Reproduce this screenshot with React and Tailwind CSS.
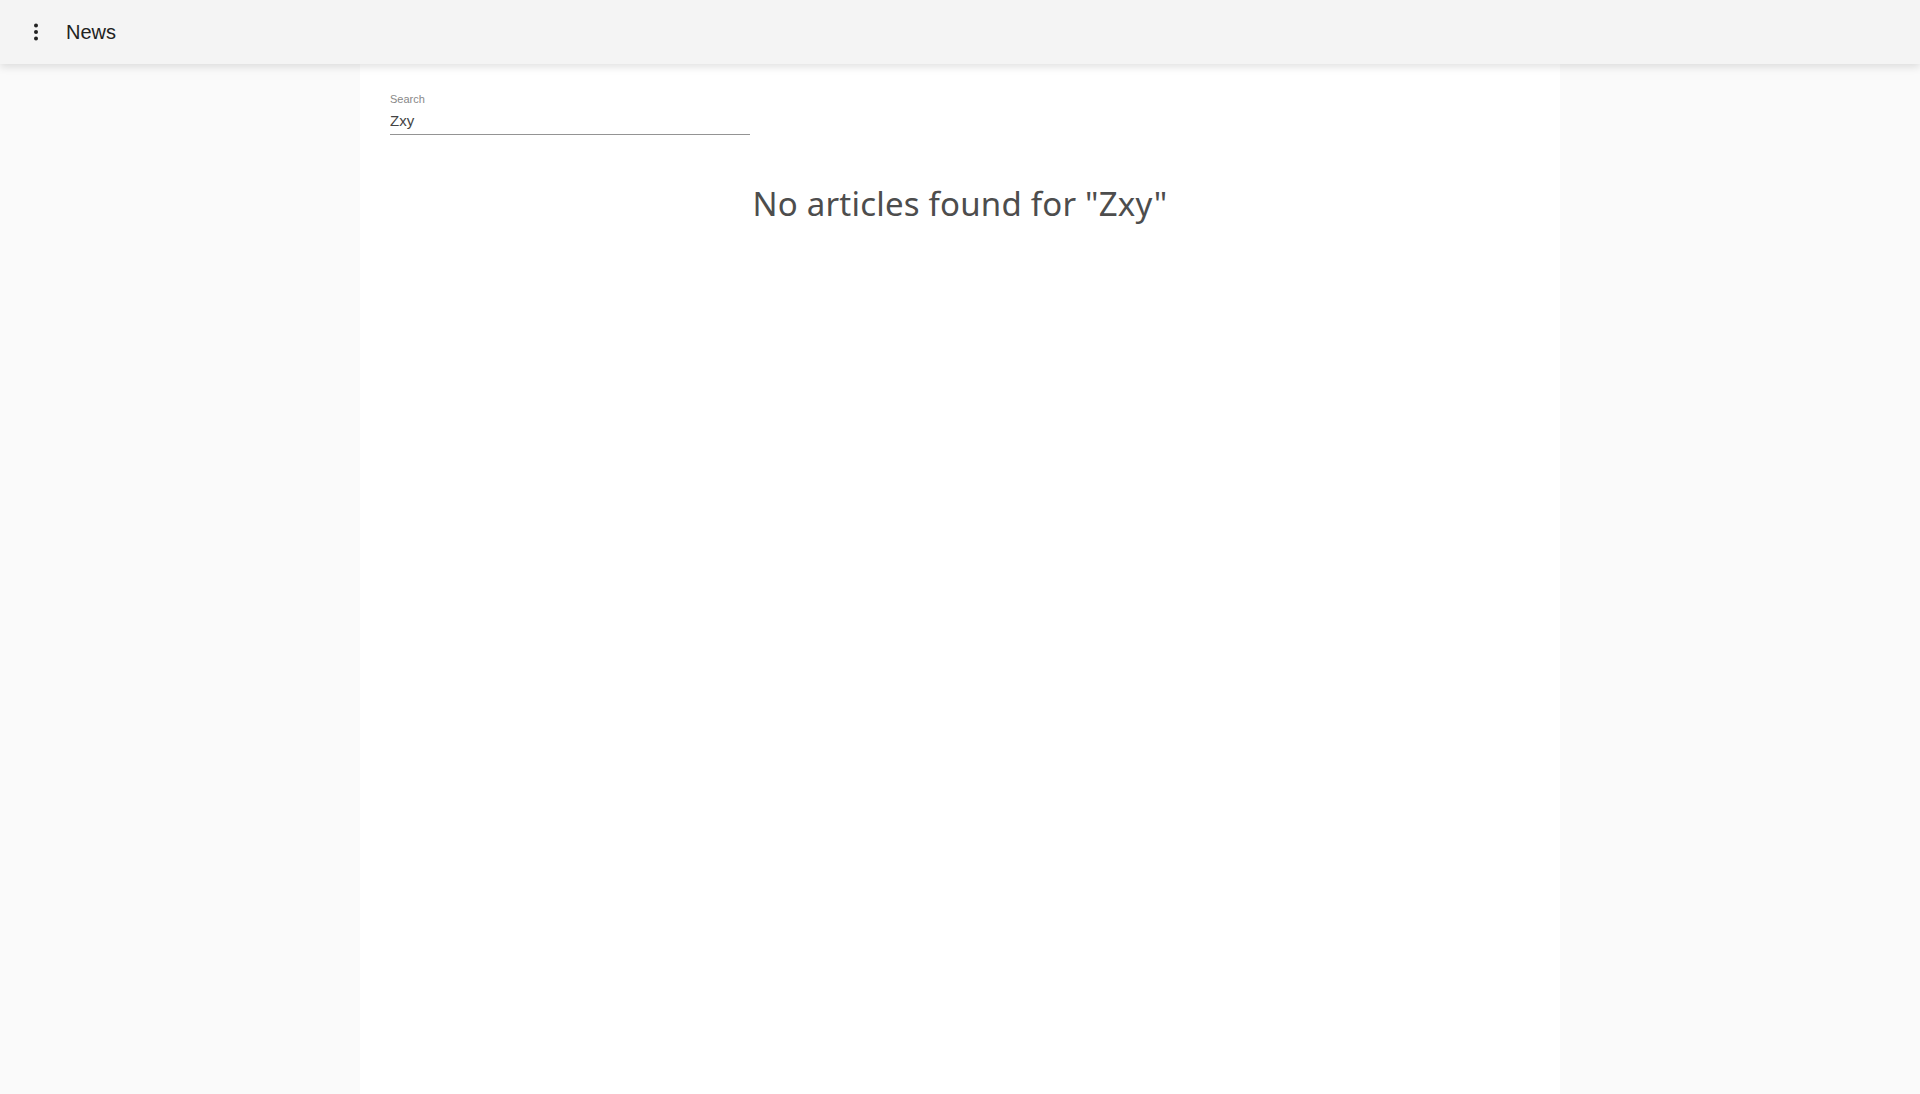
export default function App() {
    return (
        <div className="min-h-screen bg-[#fafafa] font-['Liberation_Sans',Arial,sans-serif]">
            <header className="sticky top-0 z-10 flex h-16 items-center bg-[#f4f4f4] shadow-[0_3px_8px_rgba(0,0,0,0.12)]">
                <button type="button" className="ml-[27px] flex h-6 w-[18px] items-center justify-center">
                    <svg width="6" height="18" viewBox="0 0 6 18" fill="#222">
                        <circle cx="3" cy="2.5" r="2" />
                        <circle cx="3" cy="9" r="2" />
                        <circle cx="3" cy="15.5" r="2" />
                    </svg>
                </button>
                <h1 className="ml-[21px] text-[20px] text-[#222]">News</h1>
            </header>

            <main className="mx-auto min-h-[calc(100vh-64px)] w-[1200px] bg-white px-[30px] pt-[28px]">
                <div className="w-[360px]">
                    <label htmlFor="search" className="block text-[11px] leading-[14px] text-[#888]">
                        Search
                    </label>
                    <input
                        id="search"
                        type="text"
                        defaultValue="Zxy"
                        className="mt-[6px] block w-full border-b border-[#949494] pb-[4px] text-[15px] leading-[18px] text-[#444] outline-none"
                    />
                </div>

                <h2 className="mt-[49px] text-center font-['Noto_Sans',sans-serif] text-[33px] leading-[40px] tracking-[0.2px] text-[#4d4d4d]">
                    No articles found for "Zxy"
                </h2>
            </main>
        </div>
    );
}
